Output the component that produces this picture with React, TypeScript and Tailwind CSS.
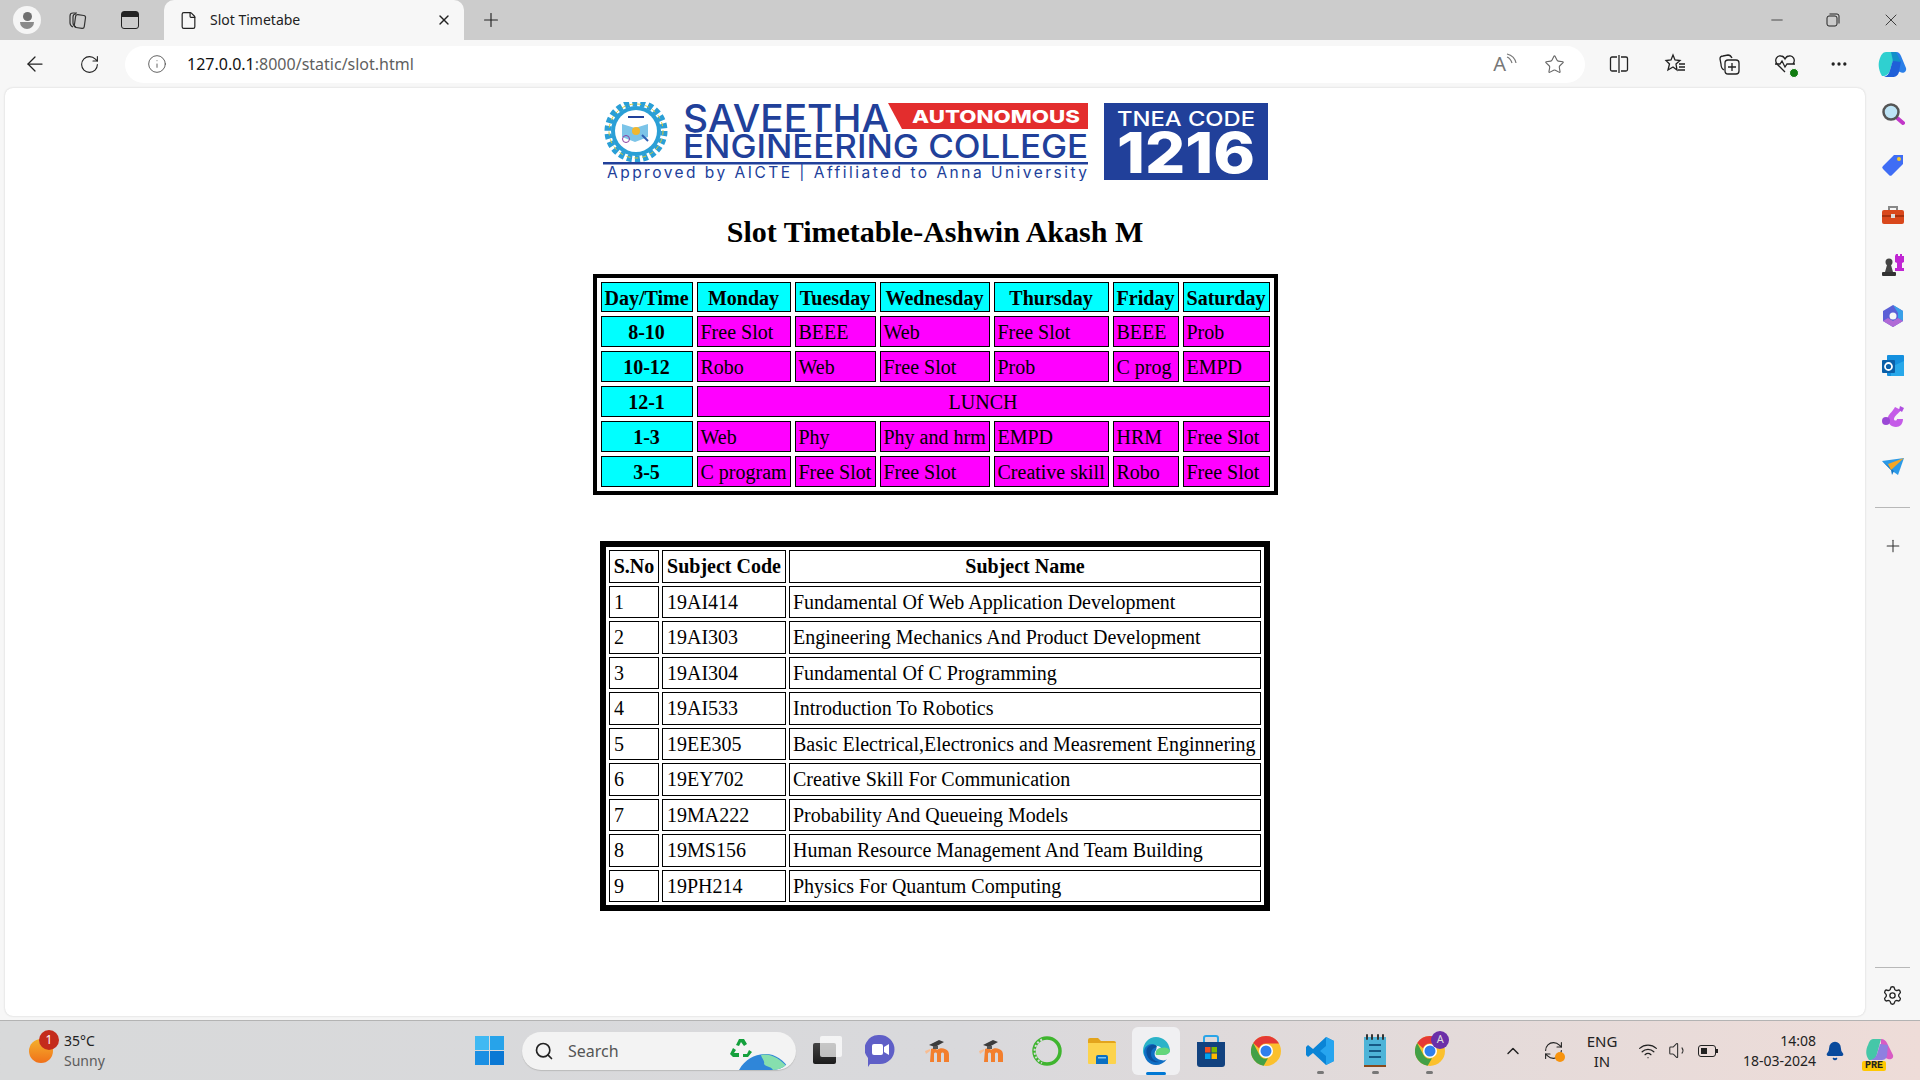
import {
  ArrowLeft,
  Bell,
  ChevronUp,
  File,
  Info,
  Minus,
  MoreHorizontal,
  Plus,
  RefreshCw,
  RotateCw,
  Search,
  Settings,
  Star,
  Volume1,
  Wifi,
  X,
} from 'lucide-react';
import React from 'react';

const timetableHead = ['Day/Time', 'Monday', 'Tuesday', 'Wednesday', 'Thursday', 'Friday', 'Saturday'];
const timetableWidths = ['w-[92px]', 'w-[94px]', 'w-[81px]', 'w-[110px]', 'w-[115px]', 'w-[66px]', 'w-[87px]'];
const timetableRows = [
  ['8-10', 'Free Slot', 'BEEE', 'Web', 'Free Slot', 'BEEE', 'Prob'],
  ['10-12', 'Robo', 'Web', 'Free Slot', 'Prob', 'C prog', 'EMPD'],
  ['12-1', 'LUNCH'],
  ['1-3', 'Web', 'Phy', 'Phy and hrm', 'EMPD', 'HRM', 'Free Slot'],
  ['3-5', 'C program', 'Free Slot', 'Free Slot', 'Creative skill', 'Robo', 'Free Slot'],
];
const subjects = [
  ['1', '19AI414', 'Fundamental Of Web Application Development'],
  ['2', '19AI303', 'Engineering Mechanics And Product Development'],
  ['3', '19AI304', 'Fundamental Of C Programming'],
  ['4', '19AI533', 'Introduction To Robotics'],
  ['5', '19EE305', 'Basic Electrical,Electronics and Measrement Enginnering'],
  ['6', '19EY702', 'Creative Skill For Communication'],
  ['7', '19MA222', 'Probability And Queueing Models'],
  ['8', '19MS156', 'Human Resource Management And Team Building'],
  ['9', '19PH214', 'Physics For Quantum Computing'],
];

const Logo = () => (
  <svg width="667" height="79" viewBox="0 0 667 79" className="shrink-0">
    {/* gear emblem */}
    <circle cx="34" cy="29" r="28" fill="none" stroke="#2a9fd6" strokeWidth="7" strokeDasharray="5 3" />
    <circle cx="34" cy="29" r="25" fill="#2a9fd6" />
    <circle cx="34" cy="29" r="27" fill="none" stroke="#d8c93a" strokeWidth="1" strokeDasharray="4 4" />
    <circle cx="34" cy="29" r="21" fill="#fff" />
    <path d="M20 22l13 4 13-4v13l-13 5-13-5z" fill="#7cc4e8" />
    <circle cx="34" cy="29" r="4" fill="#f0b72f" />
    <circle cx="24" cy="37" r="3.500" fill="none" stroke="#8b3fa0" strokeWidth="1" />
    <path d="M40 33l6 6" stroke="#2d5fb3" strokeWidth="2" />
    <path d="M26 15h16" stroke="#21409a" strokeWidth="2" />
    <text x="81" y="30" fontFamily="Inter" fontWeight="500" fontSize="38" fill="#21409a" textLength="206" lengthAdjust="spacingAndGlyphs">SAVEETHA</text>
    <path d="M286 1H486V27H300Z" fill="#e32d2d" />
    <text x="310" y="21" fontFamily="Inter" fontWeight="800" fontSize="18" fill="#fff" textLength="168" lengthAdjust="spacingAndGlyphs">AUTONOMOUS</text>
    <text x="81" y="56" fontFamily="Inter" fontWeight="500" fontSize="32" fill="#21409a" textLength="405" lengthAdjust="spacingAndGlyphs">ENGINEERING COLLEGE</text>
    <rect x="1" y="60" width="485" height="2.500" fill="#21409a" />
    <text x="5" y="76" fontFamily="Inter" fontWeight="400" fontSize="15.500" fill="#21409a" textLength="480" lengthAdjust="spacing">Approved by AICTE  |  Affiliated to Anna University</text>
    <rect x="502" y="1" width="164" height="77" fill="#21409a" />
    <text x="515" y="24" fontFamily="Inter" fontWeight="500" fontSize="20" fill="#fff" textLength="138" lengthAdjust="spacingAndGlyphs">TNEA CODE</text>
    <text x="515" y="71" fontFamily="Inter" fontWeight="800" fontSize="56" fill="#fff" textLength="138" lengthAdjust="spacingAndGlyphs">1216</text>
  </svg>
);

const Timetable = () => (
  <table className="mt-[25px] w-[685px] table-fixed border-separate border-spacing-[4px] border-4 border-black bg-white text-[20px] leading-[23px] text-black">
    <thead>
      <tr>
        {timetableHead.map((h, i) => (
          <th key={h} className={`${timetableWidths[i]} h-[30px] border border-black bg-[#00ffff] px-0 pb-0 pt-[2px] whitespace-nowrap font-bold`}>
            {h}
          </th>
        ))}
      </tr>
    </thead>
    <tbody>
      {timetableRows.map((row) => (
        <tr key={row[0]}>
          <th className="h-[31px] border border-black bg-[#00ffff] px-0 pb-0 pt-[2px] font-bold">{row[0]}</th>
          {row.length === 2 ? (
            <td colSpan={6} className="border border-black bg-[#ff00ff] px-0 pb-0 pt-[2px] text-center">
              {row[1]}
            </td>
          ) : (
            row.slice(1).map((cell, i) => (
              <td key={i} className="border border-black bg-[#ff00ff] pb-0 pl-[3px] pr-0 pt-[2px] whitespace-nowrap">
                {cell}
              </td>
            ))
          )}
        </tr>
      ))}
    </tbody>
  </table>
);

const Subjects = () => (
  <table className="mt-[46px] w-[670px] table-fixed border-separate border-spacing-[3px] border-[6px] border-black bg-white text-[20px] leading-[23px] text-black">
    <thead>
      <tr>
        <th className="h-[33px] w-[50px] border border-black p-0 font-bold">S.No</th>
        <th className="w-[124px] border border-black p-0 font-bold whitespace-nowrap">Subject Code</th>
        <th className="border border-black p-0 font-bold">Subject Name</th>
      </tr>
    </thead>
    <tbody>
      {subjects.map((row, i) => (
        <tr key={row[0]}>
          <td className={`${i % 2 === 0 ? 'h-[32px]' : 'h-[33px]'} border border-black py-0 pl-[4px] pr-0`}>{row[0]}</td>
          <td className="border border-black py-0 pl-[4px] pr-0">{row[1]}</td>
          <td className="border border-black py-0 pl-[3px] pr-0 whitespace-nowrap">{row[2]}</td>
        </tr>
      ))}
    </tbody>
  </table>
);

const ChromeIcon = ({ size = 30 }: { size?: number }) => (
  <svg width={size} height={size} viewBox="0 0 30 30">
    <circle cx="15" cy="15" r="15" fill="#fbc02d" />
    <path d="M15 0a15 15 0 0 1 13 7.500H15a7.500 7.500 0 0 0-7 4.800L2.200 7A15 15 0 0 1 15 0z" fill="#e53935" />
    <path d="M2.200 7L8.400 18.800A7.500 7.500 0 0 0 17 22.300L12.700 29.800A15 15 0 0 1 2.200 7z" fill="#43a047" />
    <circle cx="15" cy="15" r="7" fill="#fff" />
    <circle cx="15" cy="15" r="5.500" fill="#2f7fed" />
  </svg>
);

const CopilotIcon = ({ size = 30 }: { size?: number }) => (
  <svg width={size} height={size} viewBox="0 0 30 30">
    <path d="M9 3h10l-6 18c-1 4-4 6-7 6H5C1 20 1 14 3 9c1-3 3-6 6-6z" fill="#2fd0d0" />
    <path d="M19 3c3 0 4 2 5 4l5 12c1 4-3 6-6 4l-6-3z" fill="#2a7fe8" />
    <path d="M13 21l3-10 8 1-2 11c-1 4-4 5-6 5H7c3-1 5-3 6-7z" fill="#1f5fd8" />
    <path d="M14 3h5l5 10-8-1z" fill="#128fc9" />
  </svg>
);

const SidebarIcon = ({ children }: { children: React.ReactNode }) => (
  <div className="flex h-[50.4px] w-full items-center justify-center">{children}</div>
);

const Sidebar = () => (
  <div className="flex w-[55px] shrink-0 flex-col items-center pt-[1px]">
    <SidebarIcon>
      <svg width="24" height="24" viewBox="0 0 24 24">
        <path d="M15 15l7 6" stroke="#c237c9" strokeWidth="4" strokeLinecap="round" />
        <circle cx="10" cy="10" r="7.500" fill="#bde3f5" stroke="#555" strokeWidth="2.500" />
      </svg>
    </SidebarIcon>
    <SidebarIcon>
      <svg width="24" height="24" viewBox="0 0 24 24">
        <path d="M13 2h9v9L11 22a2 2 0 0 1-3 0l-6-6a2 2 0 0 1 0-3z" fill="#3f6df5" />
        <circle cx="18" cy="6" r="2" fill="#f4c92e" />
      </svg>
    </SidebarIcon>
    <SidebarIcon>
      <svg width="24" height="22" viewBox="0 0 24 22">
        <path d="M8 6V3h8v3" fill="none" stroke="#888" strokeWidth="2" />
        <rect x="1" y="6" width="22" height="14" rx="2" fill="#d9481c" />
        <rect x="1" y="11" width="22" height="2" fill="#a8320f" />
        <rect x="10" y="10" width="4" height="4" fill="#ddd" />
      </svg>
    </SidebarIcon>
    <SidebarIcon>
      <svg width="24" height="24" viewBox="0 0 24 24">
        <path d="M15 1h2v2h2V1h2v2h2v6l-2 1v5h2v3h-9v-3h2v-5l-2-1V3z" fill="#c026d3" />
        <circle cx="8" cy="9" r="3.500" fill="#444" />
        <path d="M6 12h4l2 7H4z" fill="#444" />
        <rect x="1" y="19" width="14" height="4" rx="1" fill="#333" />
      </svg>
    </SidebarIcon>
    <SidebarIcon>
      <svg width="24" height="24" viewBox="0 0 24 24">
        <path d="M12 1l10 6v10l-10 6-10-6V7z" fill="#5b5fd6" />
        <path d="M12 1l10 6v10l-5-3V9z" fill="#3aa0e8" />
        <path d="M2 17l5-3 5 3 5-3 5 3-10 6z" fill="#b06ad6" />
        <circle cx="12" cy="12" r="3.500" fill="#f7f7f7" />
      </svg>
    </SidebarIcon>
    <SidebarIcon>
      <svg width="24" height="24" viewBox="0 0 24 24">
        <rect x="6" y="1" width="17" height="21" rx="1" fill="#1490df" />
        <path d="M10 13l13-6v15H10z" fill="#28a8ea" />
        <rect x="1" y="6" width="13" height="13" rx="1" fill="#0a5fa8" />
        <circle cx="7.500" cy="12.500" r="3.500" fill="none" stroke="#fff" strokeWidth="1.800" />
      </svg>
    </SidebarIcon>
    <SidebarIcon>
      <svg width="24" height="24" viewBox="0 0 24 24">
        <path d="M14 2C12 6 8 9 7 12c-1 6 3 10 8 10 4 0 7-3 7-8h-6c0 2-3 2-3 0 0-3 5-6 7-9z" fill="#c55be8" />
        <circle cx="5" cy="16" r="4" fill="#9b48d6" />
        <path d="M19 1l4 2-2 4-3-2z" fill="#b04fe0" />
      </svg>
    </SidebarIcon>
    <SidebarIcon>
      <svg width="24" height="20" viewBox="0 0 24 20">
        <path d="M1 4L23 1 17 18 10 13z" fill="#2b9ae8" />
        <path d="M1 4l9 9 1 5 2-4z" fill="#1576c4" />
        <path d="M7 7L23 1 10 13z" fill="#f5a623" />
      </svg>
    </SidebarIcon>
    <div className="mt-[15px] h-px w-[35px] bg-[#b8b8b8]" />
    <div className="mt-[22px] flex h-[32px] items-center">
      <Plus size={20} strokeWidth={1.25} className="text-[#333]" />
    </div>
    <div className="mt-auto h-px w-[35px] bg-[#b8b8b8]" />
    <div className="mt-[17px] mb-[14px]">
      <Settings size={21} strokeWidth={1.5} className="text-[#222]" />
    </div>
  </div>
);

const TabStrip = () => (
  <div className="flex h-[40px] shrink-0 items-center bg-[#cccccc] text-[#1b1b1b]">
    <div className="ml-[13px] flex h-[28px] w-[28px] flex-col items-center justify-center rounded-full bg-[#f5f5f5]">
      <div className="h-[9px] w-[9px] rounded-full bg-[#707070]" />
      <div className="mt-[1px] h-[7px] w-[14px] rounded-b-full bg-[#8a8a8a]" />
    </div>
    <div className="ml-[26px] flex w-[20px] justify-center">
      <svg width="20" height="20" viewBox="0 0 20 20" fill="none" stroke="#333" strokeWidth="1.200">
        <rect x="8" y="5" width="10" height="13" rx="2" transform="rotate(8 13 11)" />
        <path d="M6 17c-2-1-3-2-3-4V6c0-2 1-3 3-3h4M9 17c-2-1-3-2-3-4V7c0-2 1-3 3-3" />
      </svg>
    </div>
    <div className="ml-[34px] flex h-[18px] w-[18px] flex-col rounded-[3px] border-[1.500px] border-[#222]">
      <div className="h-[5px] bg-[#222]" />
    </div>
    <div className="ml-[25px] flex h-[40px] w-[300px] items-center self-end rounded-t-[10px] bg-[#f7f7f7]">
      <File size={19} strokeWidth={1.5} className="ml-[15px] text-[#222]" />
      <span className="ml-[12px] mb-[2px] font-['Noto_Sans'] text-[14px] text-[#222]">Slot Timetabe</span>
      <X size={16} strokeWidth={2} className="ml-auto mr-[12px] text-[#222]" />
    </div>
    <Plus size={22} strokeWidth={1.25} className="ml-[16px] text-[#222]" />
    <div className="ml-auto flex items-center text-[#222]">
      <Minus size={18} strokeWidth={1} className="mr-[40px]" />
      <svg width="14" height="14" viewBox="0 0 14 14" fill="none" stroke="#222" strokeWidth="1" className="mr-[41px]">
        <rect x="1" y="3" width="10" height="10" rx="2" />
        <path d="M3.500 1H11a2 2 0 0 1 2 2v7.500" />
      </svg>
      <X size={20} strokeWidth={1} className="mr-[19px]" />
    </div>
  </div>
);

const Toolbar = () => (
  <div className="flex h-[48px] shrink-0 items-center bg-[#f7f7f7]">
    <ArrowLeft size={24} strokeWidth={1.25} className="ml-[23px] text-[#222]" />
    <RotateCw size={21} strokeWidth={1.25} className="ml-[32px] text-[#222]" />
    <div className="ml-[25px] flex h-[37px] w-[1460px] shrink-0 items-center rounded-full bg-white">
      <Info size={20} strokeWidth={1} className="ml-[22px] text-[#444]" />
      <span className="ml-[20px] font-['Noto_Sans'] text-[16px] text-[#5f5f5f]">
        <span className="text-[#111]">127.0.0.1</span>:8000/static/slot.html
      </span>
      <span className="ml-auto font-['Noto_Sans'] text-[20px] leading-none text-[#777]">A</span>
      <svg width="11" height="14" viewBox="0 0 11 14" fill="none" stroke="#777" strokeWidth="1.200" className="mb-[8px]">
        <path d="M1 1c4 1 8 4 9 9M1 4c3 1 4 3 5 6" />
      </svg>
      <Star size={21} strokeWidth={1.25} className="ml-[27px] mr-[20px] text-[#666]" />
    </div>
    <svg width="20" height="20" viewBox="0 0 20 20" fill="none" stroke="#222" strokeWidth="1.300" className="ml-[24px]">
      <path d="M8 3H3a1.500 1.500 0 0 0-1.500 1.500v11A1.500 1.500 0 0 0 3 17h5M12 3h5a1.500 1.500 0 0 1 1.500 1.500v11A1.500 1.500 0 0 1 17 17h-5M10 1v18" />
    </svg>
    <svg width="22" height="22" viewBox="0 0 22 22" fill="none" stroke="#222" strokeWidth="1.300" className="ml-[35px]">
      <path d="M9 2l2 5 5 .5-4 3.500 1 6-4-3-5 3 1.500-6L2 7.500 7 7z" />
      <path d="M15 11h6M15 14h6M14 17h7" />
    </svg>
    <svg width="22" height="22" viewBox="0 0 22 22" fill="none" stroke="#222" strokeWidth="1.300" className="ml-[33px]">
      <path d="M5 17c-2-1-3-3-3-6l-1-5c0-2 1-3 3-3l5-1c2 0 3 1 4 3" />
      <rect x="6" y="7" width="14" height="14" rx="3" />
      <path d="M13 10v8M9 14h8" />
    </svg>
    <div className="relative ml-[33px] h-[22px] w-[22px]">
      <svg width="22" height="22" viewBox="0 0 22 22" fill="none" stroke="#222" strokeWidth="1.300">
        <path d="M11 19L3 11C0 7 3 2 7 3c2 0 3 1 4 3 1-2 2-3 4-3 4-1 7 4 4 8" />
        <path d="M1 11h5l2-3 3 6 2-3h8" />
      </svg>
      <div className="absolute right-[-3px] bottom-[-3px] h-[10px] w-[10px] rounded-full border border-white bg-[#107c10]" />
    </div>
    <MoreHorizontal size={20} strokeWidth={2} className="ml-[33px] text-[#222]" />
    <div className="ml-[28px]">
      <CopilotIcon size={30} />
    </div>
  </div>
);

const TaskSlot = ({ children, className = '' }: { children: React.ReactNode; className?: string }) => (
  <div className={`relative flex h-[60px] shrink-0 items-center justify-center ${className}`}>{children}</div>
);

const RunningDot = () => <div className="absolute bottom-[7px] h-[3px] w-[7px] rounded-full bg-[#777]" />;

const MoodleIcon = () => (
  <svg width="32" height="24" viewBox="0 0 32 24">
    <path d="M9 10c2-1 5-1 6 1 2-2 6-2 8-1 3 1 4 3 4 6v7h-5v-8c0-2-3-2-3 0v8h-4v-8c0-2-3-2-3 0v8H8z" fill="#f37f2d" />
    <path d="M3 12l5-2v2l-4 3z" fill="#f8bd92" />
    <path d="M7 6l10-5 5 2-9 5z" fill="#3c3c3c" />
    <path d="M11 7h5v3h-5z" fill="#555" />
  </svg>
);

const Taskbar = () => (
  <div className="flex h-[60px] shrink-0 items-center border-t border-[#b3b3b3] bg-gradient-to-r from-[#d8d9da] via-[#d9d9dc] to-[#eedcd8] font-['Noto_Sans'] text-[#222]">
    {/* weather */}
    <div className="flex w-[462px] shrink-0 items-center pl-[29px]">
      <div className="relative h-[24px] w-[24px]">
        <div className="h-[24px] w-[24px] rounded-full bg-gradient-to-b from-[#f2b02c] to-[#f0701a]" />
        <div className="absolute right-[-6px] top-[-9px] flex h-[20px] w-[20px] items-center justify-center rounded-full bg-[#c42b1c] text-[12px] text-white">
          1
        </div>
      </div>
      <div className="ml-[11px] flex flex-col text-[14px] leading-[20px]">
        <span className="text-[#222]">35°C</span>
        <span className="text-[#5c5c5c]">Sunny</span>
      </div>
    </div>
    <TaskSlot className="w-[55px]">
      <div className="grid h-[29px] w-[29px] grid-cols-2 gap-[1px]">
        <div className="bg-[#3fb9f3]" />
        <div className="bg-[#27a3ea]" />
        <div className="bg-[#1a8fe3]" />
        <div className="bg-[#0a78d4]" />
      </div>
    </TaskSlot>
    {/* search */}
    <div className="ml-[5px] flex h-[38px] w-[274px] shrink-0 items-center rounded-full bg-[#f3f3f3] shadow-[0_1px_1px_#bbb]">
      <Search size={20} strokeWidth={2} className="ml-[12px] text-[#222]" />
      <span className="ml-[14px] text-[16px] text-[#555]">Search</span>
      <svg width="64" height="38" viewBox="0 0 64 38" className="ml-auto mr-[4px] rounded-r-full">
        <path d="M11 38C17 27 28 22 38 22c9 0 18 6 24 16z" fill="#2f86d9" />
        <path d="M33 23c9-2 19 3 29 15H45c-2-4-7-3-9-6 1-3-2-5-3-9z" fill="#86dfae" />
        <path d="M8 13l3-6h5l3 5-3 2-3-4-2 4zM2 22l3-6 3 2-2 3h5v4H5zM15 25v-3h4l2-4 3 2-4 5z" fill="#14a03c" />
      </svg>
    </div>
    <TaskSlot className="w-[55px]">
      <div className="relative h-[21px] w-[23px] translate-x-[1px] translate-y-[3px] rounded-[2px] bg-gradient-to-b from-[#444] to-[#1c1c1c]">
        <div className="absolute right-[-6px] top-[-7px] h-[21px] w-[22px] rounded-[2px] bg-[#ffffff]/70" />
      </div>
    </TaskSlot>
    <TaskSlot className="ml-[1px] w-[55px]">
      <svg width="30" height="34" viewBox="0 0 30 34">
        <path d="M15 1a14 14 0 0 1 0 29H5l-2 3v-9A14 14 0 0 1 15 1z" fill="#5f5fc7" />
        <rect x="7" y="10" width="11" height="11" rx="2" fill="#fff" />
        <path d="M19 13l5-3v11l-5-3z" fill="#fff" />
      </svg>
    </TaskSlot>
    <TaskSlot className="ml-[3px] w-[55px]">
      <MoodleIcon />
    </TaskSlot>
    <TaskSlot className="w-[54.7px]">
      <MoodleIcon />
    </TaskSlot>
    <TaskSlot className="w-[54.7px]">
      <svg width="30" height="30" viewBox="0 0 30 30" fill="none">
        <circle cx="15" cy="15" r="13" stroke="#3fb52f" strokeWidth="3.500" />
        <path d="M10 3.500A13 13 0 0 0 10 27" stroke="#d9d9dc" strokeWidth="2" strokeDasharray="2 2" />
      </svg>
    </TaskSlot>
    <TaskSlot className="w-[54.7px]">
      <svg width="30" height="28" viewBox="0 0 30 28">
        <path d="M1 3a2 2 0 0 1 2-2h8l3 3h13a2 2 0 0 1 2 2v2H1z" fill="#e3a41c" />
        <path d="M1 6h28v20a1 1 0 0 1-1 1H2a1 1 0 0 1-1-1z" fill="#fcd34d" />
        <path d="M9 27v-7a2 2 0 0 1 2-2h8a2 2 0 0 1 2 2v7z" fill="#0a6fc2" />
        <rect x="11" y="20" width="8" height="1.500" fill="#7cc4f0" />
      </svg>
    </TaskSlot>
    <TaskSlot className="w-[54.7px]">
      <div className="flex h-[48px] w-[48px] items-center justify-center rounded-[6px] bg-[#f0f0f2]">
        <svg width="30" height="30" viewBox="0 0 30 30">
          <path d="M2 15C2 7 8 1 15 1s13 5 14 13c0 4-4 5-8 5h-6c-1-4 2-7 5-7-2-3-9-3-12 1-2 2-2 6 0 9C4 22 2 19 2 15z" fill="#2bb3c8" />
          <path d="M29 14c0 4-4 5-8 5h-6c-1-4 2-7 5-7 3-1 6-1 9 2z" fill="#63d67a" />
          <path d="M3 16c0-5 4-8 8-8 5 0 5 4 4 6-3 4-1 9 5 10 3 1 5 0 6-1-3 4-7 6-11 6-7 0-12-6-12-13z" fill="#0f6fc5" />
          <path d="M7 11c3-3 8-3 9 0-4 1-6 3-6 7 0 4 3 7 8 8-5 1-10-1-12-7-1-3-1-6 1-8z" fill="#0c4f9c" />
        </svg>
      </div>
      <div className="absolute bottom-[6px] h-[3px] w-[20px] rounded-full bg-[#0078d4]" />
    </TaskSlot>
    <TaskSlot className="w-[54.7px]">
      <svg width="30" height="34" viewBox="0 0 30 34">
        <path d="M8 8V4a2 2 0 0 1 2-2h10a2 2 0 0 1 2 2v4" fill="none" stroke="#2aa5e8" strokeWidth="2" />
        <path d="M1 8h28v22a3 3 0 0 1-3 3H4a3 3 0 0 1-3-3z" fill="#12427f" />
        <rect x="9" y="13" width="5.500" height="5.500" fill="#f25022" />
        <rect x="15.500" y="13" width="5.500" height="5.500" fill="#7fba00" />
        <rect x="9" y="19.500" width="5.500" height="5.500" fill="#00a4ef" />
        <rect x="15.500" y="19.500" width="5.500" height="5.500" fill="#ffb900" />
      </svg>
    </TaskSlot>
    <TaskSlot className="w-[54.7px]">
      <ChromeIcon />
    </TaskSlot>
    <TaskSlot className="w-[54.7px]">
      <svg width="30" height="30" viewBox="0 0 30 30">
        <path d="M21 1l8 4v20l-8 4L8 17l-5 4-2-2v-8l2-2 5 4z" fill="#0a84d6" />
        <path d="M21 1l8 4v20l-8 4V20l-6-5 6-5z" fill="#27a5ef" />
      </svg>
      <RunningDot />
    </TaskSlot>
    <TaskSlot className="w-[54.7px]">
      <svg width="24" height="34" viewBox="0 0 24 34">
        <rect x="1" y="3" width="22" height="28" fill="#4db4d8" />
        <rect x="1" y="31" width="22" height="2" fill="#8a4a1c" />
        <path d="M4 1v4M9 1v4M15 1v4M20 1v4" stroke="#333" strokeWidth="2" strokeLinecap="round" />
        <path d="M6 11h12M6 17h12M6 23h12" stroke="#165a85" strokeWidth="2" />
      </svg>
      <RunningDot />
    </TaskSlot>
    <TaskSlot className="w-[54.7px]">
      <ChromeIcon />
      <div className="absolute right-[8px] top-[10px] flex h-[18px] w-[18px] items-center justify-center rounded-full bg-[#6b2fa8] text-[11px] text-[#ddd]">
        A
      </div>
      <RunningDot />
    </TaskSlot>
    <div className="flex-1" />
    {/* system tray */}
    <div className="flex w-[40px] shrink-0 justify-center">
      <ChevronUp size={20} strokeWidth={1.75} className="text-[#222]" />
    </div>
    <div className="relative flex w-[40px] shrink-0 justify-center">
      <RefreshCw size={21} strokeWidth={1.25} className="text-[#222]" />
      <div className="absolute bottom-[-1px] right-[8px] h-[10px] w-[10px] rounded-full bg-[#f7930e]" />
    </div>
    <div className="flex w-[58px] shrink-0 flex-col items-center text-[15px] leading-[20px]">
      <span>ENG</span>
      <span>IN</span>
    </div>
    <div className="ml-[2px] flex w-[30px] shrink-0 justify-center">
      <Wifi size={20} strokeWidth={1.5} className="text-[#222]" />
    </div>
    <div className="flex w-[30px] shrink-0 justify-center">
      <Volume1 size={21} strokeWidth={1.25} className="text-[#333]" />
    </div>
    <div className="flex w-[30px] shrink-0 items-center justify-center">
      <div className="flex h-[12px] w-[18px] items-center rounded-[3px] border-[1.500px] border-[#222] pl-[2px]">
        <div className="h-[6px] w-[6px] bg-[#222]" />
      </div>
      <div className="h-[4px] w-[2px] bg-[#222]" />
    </div>
    <div className="flex w-[93px] shrink-0 flex-col items-end text-[14px] leading-[20px]">
      <span>14:08</span>
      <span>18-03-2024</span>
    </div>
    <div className="flex w-[38px] shrink-0 justify-center">
      <Bell size={20} fill="#0a4a9c" className="text-[#0a4a9c]" />
    </div>
    <div className="relative flex w-[51px] shrink-0 justify-center">
      <svg width="30" height="26" viewBox="0 0 30 26">
        <path d="M8 1h8l-4 15c-1 4-3 6-6 6H4C0 17 1 11 3 7c1-4 3-6 5-6z" fill="#45c7a8" />
        <path d="M16 1c3 0 5 2 6 4l6 12c1 4-3 5-5 4l-7-3z" fill="#d85bc4" />
        <path d="M12 16l3-10 8 1-1 11c-1 3-3 4-5 4H6c3-1 5-3 6-6z" fill="#8f7fe0" />
      </svg>
      <div className="absolute bottom-[-7px] left-[8px] rounded-[2px] bg-[#ffc800] px-[3px] font-['Liberation_Mono'] text-[10px] leading-[10px] font-bold text-[#222]">
        PRE
      </div>
    </div>
    <div className="w-[15px] shrink-0" />
  </div>
);

const App = () => {
  return (
    <div className="flex h-[1080px] w-[1920px] flex-col overflow-hidden bg-[#f7f7f7] font-['Liberation_Sans']">
      <TabStrip />
      <Toolbar />
      <div className="flex min-h-0 flex-1">
        {/* page */}
        <div className="mb-[4px] ml-[5px] flex flex-1 flex-col items-center rounded-[8px] bg-white font-['Liberation_Serif'] shadow-[0_0_2px_#c8c8c8]">
          <div className="mt-[14px]">
            <Logo />
          </div>
          <h1 className="mt-[34px] text-[30px] leading-[34px] font-bold text-black">Slot Timetable-Ashwin Akash M</h1>
          <Timetable />
          <Subjects />
        </div>
        <Sidebar />
      </div>
      <Taskbar />
    </div>
  );
};

export default App;
